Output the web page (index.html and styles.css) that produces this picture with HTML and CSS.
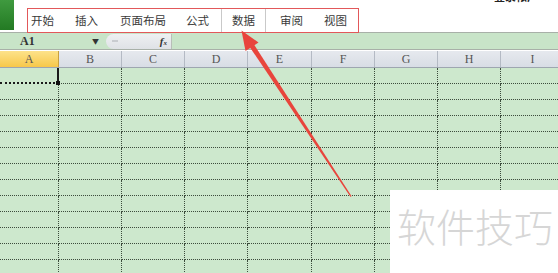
FILE: index.html
```html
<!DOCTYPE html>
<html lang="zh">
<head>
<meta charset="utf-8">
<link rel="stylesheet" href="styles.css">
</head>
<body>
<div class="app">
  <div class="topbar">
    <div class="filebtn"></div>
    <div class="tabs">
      <span class="tab t1">开始</span>
      <span class="tab t2">插入</span>
      <span class="tab t3">页面布局</span>
      <span class="tab t4">公式</span>
      <span class="tab active">数据</span>
      <span class="tab t6">审阅</span>
      <span class="tab t7">视图</span>
    </div>
    <span class="login">登录帐户</span>
  </div>
  <div class="formulabar">
    <span class="namebox">A1</span>
    <span class="dd">▼</span>
    <span class="fxfield"><span class="knob"></span><span class="fx">f<sub>x</sub></span></span>
    <span class="fbrest"></span>
  </div>
  <div class="colheads">
    <div class="ch sel">A</div><div class="ch">B</div><div class="ch">C</div><div class="ch">D</div><div class="ch">E</div><div class="ch">F</div><div class="ch">G</div><div class="ch">H</div><div class="ch last">I</div>
  </div>
  <div class="grid" id="grid"></div>
  <svg class="arrow" width="558" height="273" viewBox="0 0 558 273">
    <polygon points="351.6,196.2 350.4,196.8 250.0,47.4 254.0,44.6" fill="#e8453c"/>
    <polygon points="241.5,30.5 258.5,42.5 245.5,51" fill="#e8453c"/>
  </svg>
  <div class="watermark">软件技巧</div>
</div>
<script>
  var g = document.getElementById('grid');
  var html = '';
  for (var r = 0; r < 13; r++) {
    for (var c = 0; c < 9; c++) {
      var cls = 'cell';
      if (r === 0 && c === 0) cls += ' a1';
      html += '<div class="' + cls + '"></div>';
    }
  }
  g.innerHTML = html;
</script>
</body>
</html>
```
FILE: styles.css
```css
html, body {
  margin: 0;
  padding: 0;
  background: #ffffff;
}
.app {
  position: relative;
  width: 558px;
  height: 273px;
  overflow: hidden;
  font-family: "Noto Sans CJK SC", "Noto Sans", sans-serif;
}
.topbar {
  height: 32px;
  display: flex;
  align-items: flex-start;
  background: #ffffff;
}
.filebtn {
  width: 14px;
  height: 30px;
  background: linear-gradient(180deg, #3f9a3f 0%, #237a23 100%);
}
.tabs {
  margin-left: 13px;
  margin-top: 8px;
  width: 330px;
  height: 23px;
  border: 1.5px solid #e2585a;
  display: flex;
  align-items: stretch;
  font-size: 11.5px;
  color: #3a3a3a;
  position: relative;
}
.tab {
  display: flex;
  align-items: center;
  line-height: 1;
}
.t1 { margin-left: 3px; }
.t2 { margin-left: 21px; }
.t3 { margin-left: 22px; }
.t4 { margin-left: 20px; }
.active {
  margin-left: 12px;
  padding: 0 10px;
  border-left: 1px solid #c9c9c9;
  border-right: 1px solid #c9c9c9;
}
.t6 { margin-left: 14px; }
.t7 { margin-left: 21px; }
.login {
  margin-left: auto;
  margin-right: 20px;
  margin-top: -12px;
  font-size: 11px;
  font-weight: bold;
  color: #222;
}
.formulabar {
  height: 16px;
  border-top: 1px solid #a8b0a8;
  border-bottom: 1px solid #a8b0a8;
  background: #c8e4c8;
  display: flex;
  align-items: center;
}
.namebox {
  margin-left: 20px;
  width: 72px;
  font-family: "Liberation Serif", "DejaVu Serif", serif;
  font-weight: bold;
  font-size: 12px;
  color: #333;
}
.dd {
  font-size: 7px;
  color: #333;
  width: 14px;
}
.fxfield {
  height: 15px;
  width: 65px;
  background: linear-gradient(180deg, #eef0f2, #dfe2e6);
  border-radius: 8px 0 0 8px;
  display: flex;
  align-items: center;
  justify-content: space-between;
  border-right: 1px solid #b8beb8;
}
.knob {
  margin-left: 6px;
  width: 6px;
  height: 2px;
  background: #c9ccd0;
}
.fx {
  font-family: "Liberation Serif", serif;
  font-style: italic;
  font-weight: bold;
  font-size: 11px;
  color: #333;
  margin-right: 4px;
}
.fx sub {
  font-size: 7px;
  vertical-align: 0;
}
.fbrest { flex: 1; }
.colheads {
  margin-top: 1px;
  height: 17px;
  display: grid;
  grid-template-columns: 59px 63px 63px 63px 64px 63px 63px 63px 63px;
  background: linear-gradient(180deg, #e6e9ee, #d8dde5);
  border-bottom: 1px solid #9ea6b0;
  box-sizing: border-box;
}
.ch {
  border-right: 1px solid #b4bac4;
  display: flex;
  align-items: center;
  justify-content: center;
  font-family: "Liberation Serif", "DejaVu Serif", serif;
  font-size: 12px;
  color: #555;
}
.ch.sel {
  background: linear-gradient(180deg, #fde28a, #f7c84a);
  border-right-color: #c8a040;
}
.ch.last { border-right: none; }
.grid {
  display: grid;
  grid-template-columns: 59px 63px 63px 63px 64px 63px 63px 63px 63px;
  grid-auto-rows: 16px;
  background: #cde8cd;
}
.cell {
  box-sizing: border-box;
  border-right: 1px dotted #3c4c3c;
  border-bottom: 1px dotted #3c4c3c;
}
.cell.a1 {
  border-right: 2px solid #1a1a1a;
  border-bottom: 2px dotted #1a1a1a;
  position: relative;
}
.cell.a1::after {
  content: "";
  position: absolute;
  right: -3px;
  bottom: -3px;
  width: 4px;
  height: 4px;
  background: #111;
}
.arrow {
  position: absolute;
  left: 0;
  top: 0;
}
.watermark {
  position: absolute;
  left: 390px;
  top: 190px;
  width: 168px;
  height: 83px;
  background: #ffffff;
  box-sizing: border-box;
  padding: 12px 0 0 7px;
  font-family: "Noto Sans CJK SC", sans-serif;
  font-weight: 300;
  font-size: 39px;
  line-height: 1.2;
  color: #d6d6d6;
  white-space: nowrap;
}
```
